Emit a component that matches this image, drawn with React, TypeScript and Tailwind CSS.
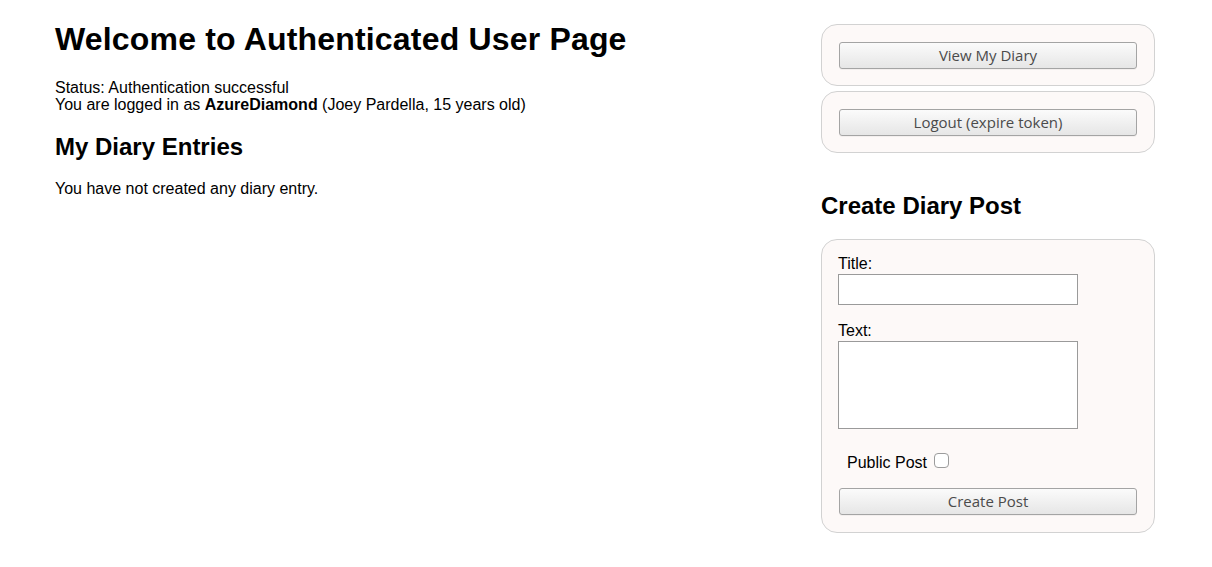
import React from 'react';

const GtkButton: React.FC<{ label: string }> = ({ label }) => (
  <div className="px-[1px]">
    <button
      type="button"
      className="block w-full h-[27px] rounded-[3px] border border-[#a4a4a4] bg-linear-to-b from-[#fbfbfb] to-[#e6e6e6] text-[15px] leading-none text-[#4b4b4b] font-['Open_Sans',sans-serif] shadow-[0_1px_0_rgba(0,0,0,0.04)]"
    >
      {label}
    </button>
  </div>
);

const Panel: React.FC<{ className?: string; children: React.ReactNode }> = ({ className = '', children }) => (
  <div className={`rounded-[16px] border border-[#d2d2d2] bg-[#fdf9f8] px-[16px] ${className}`}>{children}</div>
);

export default function App() {
  return (
    <div className="flex min-h-[567px] w-full bg-white pl-[55px] pr-[57px] font-['Liberation_Sans',Arial,sans-serif] text-black">
      {/* Main column */}
      <div className="flex-1">
        <h1 className="mt-[21px] text-[32px] font-bold leading-[37px] tracking-[0.18px]">
          Welcome to Authenticated User Page
        </h1>
        <div className="mt-[21px] text-base leading-[17px]">
          <div>Status: Authentication successful</div>
          <div>
            You are logged in as <b>AzureDiamond</b> (Joey Pardella, 15 years old)
          </div>
        </div>
        <h2 className="mt-[20px] text-2xl font-bold leading-[28px]">My Diary Entries</h2>
        <p className="mt-[19px] text-base leading-[18px]">You have not created any diary entry.</p>
      </div>

      {/* Sidebar */}
      <div className="w-[334px] pt-[24px]">
        <Panel className="pt-[17px] pb-[16px]">
          <GtkButton label="View My Diary" />
        </Panel>
        <Panel className="mt-[5px] pt-[17px] pb-[16px]">
          <GtkButton label="Logout (expire token)" />
        </Panel>

        <h2 className="mt-[39px] text-2xl font-bold leading-[28px]">Create Diary Post</h2>

        <Panel className="mt-[19px] pt-[15px] pb-[17px]">
          <label className="block text-base leading-[18px]">Title:</label>
          <input
            type="text"
            className="mt-[1px] block h-[31px] w-[240px] border border-[#9a9a9a] bg-white px-1 outline-none"
          />
          <label className="mt-[17px] block text-base leading-[18px]">Text:</label>
          <textarea className="mt-[1px] block h-[88px] w-[240px] resize-none border border-[#9a9a9a] bg-white outline-none" />
          <div className="mt-[25px] ml-[9px] flex items-start text-base leading-[18px]">
            <span>Public Post</span>
            <input
              type="checkbox"
              className="ml-[7px] -mt-[1px] h-[15px] w-[15px] appearance-none rounded-[4px] border border-[#9c9c9c] bg-white"
            />
          </div>
          <div className="mt-[16px]">
            <GtkButton label="Create Post" />
          </div>
        </Panel>
      </div>
    </div>
  );
}
